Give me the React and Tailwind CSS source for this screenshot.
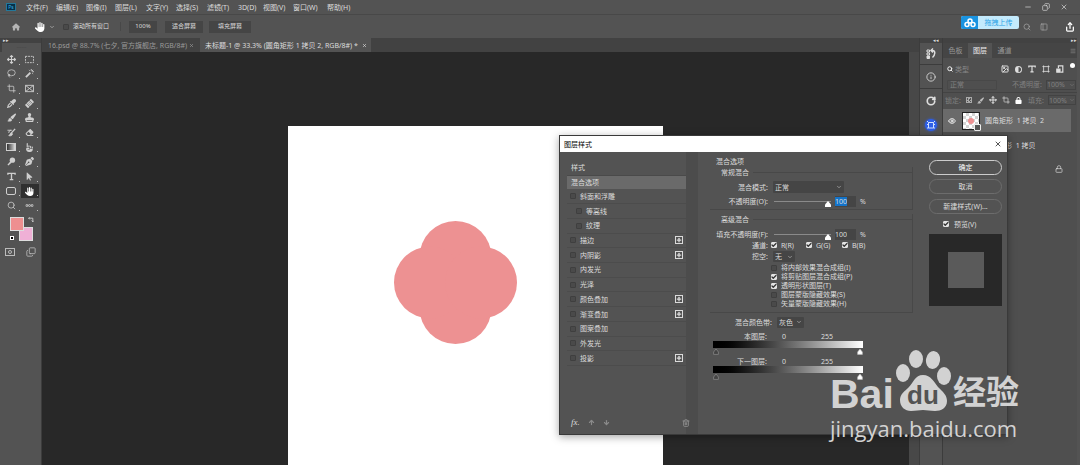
import React from 'react';
import {
    FaArrowPointer,
    FaArrowsUpDownLeftRight,
    FaBandage,
    FaCircleHalfStroke,
    FaEraser,
    FaEyeDropper,
    FaHand,
    FaHandPointUp,
    FaHouse,
    FaLock,
    FaPaintbrush,
    FaPenNib,
    FaStamp,
} from 'react-icons/fa6';
import {
    ArrowDown,
    ArrowUp,
    Check,
    ChevronDown,
    Copy,
    Crop,
    Ellipsis,
    Eye,
    Image,
    Info,
    Lasso,
    Lock,
    Menu,
    Minus,
    Move,
    PanelLeft,
    Plus,
    RotateCw,
    Search,
    Share,
    Trash2,
    X,
} from 'lucide-react';

const menus = [
    ['文件(F)', 'w-[30px]'],
    ['编辑(E)', 'w-[30px]'],
    ['图像(I)', 'w-[29px]'],
    ['图层(L)', 'w-[31px]'],
    ['文字(Y)', 'w-[30px]'],
    ['选择(S)', 'w-[31px]'],
    ['滤镜(T)', 'w-[31px]'],
    ['3D(D)', 'w-[25px]'],
    ['视图(V)', 'w-[30px]'],
    ['窗口(W)', 'w-[34px]'],
    ['帮助(H)', 'w-[30px]'],
];

const MarqueeIcon = () => (
    <svg viewBox="0 0 20 16" className="h-2 w-[10px]" fill="none" stroke="currentColor" strokeWidth="2" strokeDasharray="4 2">
        <path d="M1 1h18v14H1z" />
    </svg>
);

const WandIcon = () => (
    <svg viewBox="0 0 20 20" className="size-[10px]" fill="none" stroke="currentColor" strokeWidth="2">
        <path d="M2 18L12 8" strokeWidth="4" />
        <path d="M14 0v4M20 6h-4M18 2l-3 3M9 2l2 2M18 11l-2-2" />
    </svg>
);

const FrameIcon = () => (
    <svg viewBox="0 0 20 16" className="h-2 w-[10px]" fill="none" stroke="currentColor" strokeWidth="2">
        <path d="M1 1h18v14H1zM1 1l18 14M19 1L1 15" />
    </svg>
);

const HistoryBrushIcon = () => (
    <svg viewBox="0 0 20 20" className="size-[10px]" fill="none" stroke="currentColor" strokeWidth="2">
        <path d="M1 5h9M10 5c-5 0-6 3-6 6" />
        <path d="M18 2L9 12" strokeWidth="3" />
        <path d="M10 11c-3 0-3 4-6 6 4 1 8 0 8-4z" fill="currentColor" />
    </svg>
);

const GradientIcon = () => (
    <span className="h-2 w-[10px] border border-[#cfcfcf] bg-linear-to-r from-[#333] to-[#ddd]" />
);

const DodgeIcon = () => (
    <svg viewBox="0 0 20 20" className="size-[10px]" fill="currentColor">
        <circle cx="12" cy="7" r="6" />
        <path d="M7 10l3 3-7 6-2-2z" />
    </svg>
);

const ShapeIcon = () => <span className="h-2 w-[10px] rounded-[2px] border border-[#cfcfcf]" />;

const TypeIcon = () => (
    <svg viewBox="0 0 20 20" className="size-2" fill="none" stroke="currentColor" strokeWidth="3">
        <path d="M2 6V3h16v3M10 3v14M6 17h8" />
    </svg>
);

const tools = [
    ['移动', FaArrowsUpDownLeftRight, '选框', MarqueeIcon],
    ['套索', Lasso, '魔棒', WandIcon],
    ['裁剪', Crop, '图框', FrameIcon],
    ['吸管', FaEyeDropper, '修复画笔', () => <FaBandage className="-rotate-45" />],
    ['画笔', FaPaintbrush, '图章', FaStamp],
    ['历史画笔', HistoryBrushIcon, '橡皮擦', FaEraser],
    ['渐变', GradientIcon, '涂抹', FaHandPointUp],
    ['减淡', DodgeIcon, '钢笔', FaPenNib],
    ['文字', TypeIcon, '选择', FaArrowPointer],
    ['矩形', ShapeIcon, '抓手', FaHand],
    ['缩放', Search, '更多', () => <Ellipsis strokeWidth={5} />],
];

const effects = [
    { name: '斜面和浮雕' },
    { name: '等高线', sub: true },
    { name: '纹理', sub: true },
    { name: '描边', add: true },
    { name: '内阴影', add: true },
    { name: '内发光' },
    { name: '光泽' },
    { name: '颜色叠加', add: true },
    { name: '渐变叠加', add: true },
    { name: '图案叠加' },
    { name: '外发光' },
    { name: '投影', add: true },
];

const blendFlags = [
    ['将内部效果混合成组(I)', false],
    ['将剪贴图层混合成组(P)', true],
    ['透明形状图层(T)', true],
    ['图层蒙版隐藏效果(S)', false],
    ['矢量蒙版隐藏效果(H)', false],
];

function CheckBox({ label, checked = false, className = '' }) {
    return (
        <label className={`flex items-center ${className}`}>
            <span className="relative flex size-[6px] shrink-0">
                <input
                    type="checkbox"
                    defaultChecked={checked}
                    className="peer size-full appearance-none rounded-[1px] border border-[#3f3f3f] bg-[#4a4a4a] checked:border-[#e4e4e4] checked:bg-[#e4e4e4]"
                />
                <Check className="pointer-events-none absolute inset-0 hidden size-full text-[#333] peer-checked:block" strokeWidth={5} />
            </span>
            <span>{label}</span>
        </label>
    );
}

function DropDown({ label, value, className = '' }) {
    return (
        <span className={`relative flex items-center ${className}`}>
            <select aria-label={label} className="h-full w-full appearance-none rounded-[1px] bg-[#454545] px-[2px] leading-none">
                <option>{value}</option>
            </select>
            <ChevronDown className="pointer-events-none absolute right-[2px] size-[6px]" />
        </span>
    );
}

function OpacityRow({ id, label, active, className = '' }) {
    return (
        <div className={`flex items-center ${className}`}>
            <label htmlFor={id} className="flex w-[54px] shrink-0 justify-end whitespace-nowrap">{label}</label>
            <input
                type="range"
                aria-label={label}
                defaultValue={100}
                className="ml-[6px] h-px w-[57px] appearance-none bg-[#8a8a8a] [&::-webkit-slider-thumb]:mt-[6px] [&::-webkit-slider-thumb]:h-[6px] [&::-webkit-slider-thumb]:w-[6px] [&::-webkit-slider-thumb]:appearance-none [&::-webkit-slider-thumb]:bg-white [&::-webkit-slider-thumb]:[clip-path:polygon(50%_0,100%_60%,100%_100%,0_100%,0_60%)]"
            />
            <span className="ml-1 flex h-[11px] w-[21px] items-center bg-[#454545]">
                <input
                    id={id}
                    defaultValue="100"
                    className={active ? 'h-[9px] w-3 bg-[#1373c9] text-center' : 'h-[9px] w-3 bg-transparent text-center'}
                />
            </span>
            <span className="ml-1">%</span>
        </div>
    );
}

function BlendRamp({ label, className = '' }) {
    return (
        <div className={className}>
            <div className="flex h-[10px] items-center">
                <span className="w-[54px] text-right">{label}</span>
                <span className="w-[34px] text-center">0</span>
                <span className="w-[52px] text-center">255</span>
            </div>
            <div className="h-[7px] w-[150px] bg-linear-to-r from-black to-white" />
            <div className="mt-px flex h-[6px] w-[150px] justify-between">
                <svg viewBox="0 0 10 10" className="size-[6px] fill-[#444] stroke-[#999]">
                    <path d="M5 0l4 5v4H1V5z" />
                </svg>
                <svg viewBox="0 0 10 10" className="size-[6px] fill-white stroke-[#bbb]">
                    <path d="M5 0l4 5v4H1V5z" />
                </svg>
            </div>
        </div>
    );
}

function TopBars() {
    return (
        <header className="relative shrink-0">
            <nav className="flex h-[14px] items-center">
                <span className="ml-[6px] mr-[10px] flex h-2 w-[10px] items-center justify-center border border-[#24789a] bg-[#06304a] text-[5px] leading-none text-[#3bb8e8]">Ps</span>
                {menus.map(([name, width]) => (
                    <button key={name} className={`${width} h-[13px] text-left whitespace-nowrap`}>{name}</button>
                ))}
                <div className="mr-3 ml-auto flex items-center gap-[10px]">
                    <button aria-label="最小化"><Minus className="size-2" /></button>
                    <button aria-label="还原"><Copy className="size-2 -scale-x-100" /></button>
                    <button aria-label="关闭"><X className="size-2" /></button>
                </div>
            </nav>
            <div className="flex h-6 items-center border-t border-[#484848] pl-3 text-[6px]">
                <FaHouse className="size-2 text-[#b5b5b5]" />
                <FaHand className="ml-[15px] size-[10px] text-white" />
                <ChevronDown className="ml-1 size-[6px]" />
                <CheckBox label="滚动所有窗口" className="ml-2 w-[58px] gap-1 border-r border-[#484848] whitespace-nowrap" />
                <button className="ml-2 h-3 w-7 bg-[#454545]">100%</button>
                <button className="ml-2 h-3 w-[38px] bg-[#454545]">适合屏幕</button>
                <button className="ml-[6px] h-3 w-[42px] bg-[#454545]">填充屏幕</button>
                <div className="mr-[5px] ml-auto flex items-center gap-[9px]">
                    <Search className="size-2 text-[#aaa]" />
                    <PanelLeft className="size-2 text-[#aaa]" />
                    <Share className="ml-2 size-[10px] text-white" strokeWidth={3} />
                </div>
            </div>
            <button className="absolute top-4 right-[61px] flex h-[13px] w-[58px] items-stretch overflow-hidden rounded-[2px] bg-[#c3eafc] text-[7px] text-[#2ba2e6]">
                <span className="flex w-[17px] items-center justify-center bg-[#1a93e0]">
                    <svg viewBox="0 0 24 20" className="h-[10px] w-3" fill="none" stroke="white" strokeWidth="3">
                        <circle cx="12" cy="6" r="4" />
                        <circle cx="6" cy="13" r="4" />
                        <circle cx="18" cy="13" r="4" />
                    </svg>
                </span>
                <span className="flex-1 self-center">拖拽上传</span>
            </button>
        </header>
    );
}

function Toolbar() {
    return (
        <aside className="w-[42px] shrink-0 border-r border-[#3c3c3c]">
            <div className="h-[5px] bg-[#424242] pl-[3px] text-[5px] leading-[4px]">▸▸</div>
            <div className="h-[9px] border-l-2 border-[#424242] text-center text-[5px] leading-[9px] text-[#333]">┄┄</div>
            <div className="flex h-[161px] flex-col px-[2px]">
                {tools.map(([leftName, LeftIcon, rightName, RightIcon]) => (
                    <div key={leftName} className="flex flex-1 text-[#cfcfcf]">
                        <button aria-label={leftName} className="relative flex flex-1 items-center justify-center [&>svg]:size-[9px]">
                            <LeftIcon />
                            <i className="absolute right-px bottom-[2px] size-px bg-[#bbb]" />
                        </button>
                        <button
                            aria-label={rightName}
                            className={`relative flex flex-1 items-center justify-center [&>svg]:size-[9px] ${rightName === '抓手' ? 'bg-[#2f2f2f] text-white' : ''}`}
                        >
                            <RightIcon />
                            <i className="absolute right-px bottom-[2px] size-px bg-[#bbb]" />
                        </button>
                    </div>
                ))}
            </div>
            <div className="relative ml-[10px] mt-1 h-6 w-[23px]">
                <button aria-label="背景色" className="absolute right-0 bottom-0 size-[14px] border border-[#ddd] bg-[#efb0d6]" />
                <button aria-label="前景色" className="absolute top-0 left-0 size-[14px] border border-[#ddd] bg-[#ee8f90]" />
                <svg viewBox="0 0 10 10" className="absolute top-0 right-[-1px] size-[6px]" fill="none" stroke="#ccc" strokeWidth="1.5">
                    <path d="M3 0L1 2l2 2M1 2h7v6M6 6l2 2 2-2" />
                </svg>
                <span className="absolute bottom-px left-0 size-1 border border-white bg-black" />
            </div>
            <div className="mt-[6px] flex items-center justify-around text-[#bbb]">
                <span className="flex h-2 w-[10px] items-center justify-center border border-current">
                    <i className="size-1 rounded-full border border-current" />
                </span>
                <Copy className="size-[10px] -scale-y-100" />
            </div>
        </aside>
    );
}

function Workspace() {
    return (
        <main className="flex min-w-0 flex-1 flex-col">
            <div className="flex h-[14px] shrink-0 items-stretch bg-[#424242] text-[7px] whitespace-nowrap">
                <div className="flex w-[158px] items-center justify-between pr-[6px] pl-[6px] text-[#999]">
                    <span>16.psd @ 88.7% (七夕, 官方旗舰店, RGB/8#)</span>
                    <X className="size-[5px]" strokeWidth={3} />
                </div>
                <div className="flex w-[171px] items-center justify-between bg-[#535353] pr-1 pl-[5px]">
                    <span>未标题-1 @ 33.3% (圆角矩形 1 拷贝 2, RGB/8#) *</span>
                    <X className="size-[5px]" strokeWidth={3} />
                </div>
            </div>
            <div className="flex flex-1">
                <div className="flex flex-1 justify-center bg-[#282828] pt-[74px]">
                    <div className="w-[375px] bg-white pt-[95px] pl-[106px]">
                        <svg viewBox="0 0 123 123" className="size-[123px] fill-[#ed9192]">
                            <circle cx="61.5" cy="36" r="36" />
                            <circle cx="61.5" cy="87" r="36" />
                            <circle cx="36" cy="61.5" r="36" />
                            <circle cx="87" cy="61.5" r="36" />
                        </svg>
                    </div>
                </div>
                <div className="w-[10px] bg-[#484848]" />
            </div>
        </main>
    );
}

function IconStrip() {
    return (
        <aside className="flex w-6 shrink-0 flex-col border-x border-[#3c3c3c] text-[#dedede]">
            <div className="h-[5px] bg-[#424242] pr-[3px] text-right text-[5px] leading-[4px]">◂◂</div>
            <button aria-label="历史记录" className="flex h-[22px] items-center justify-center border-b border-[#3c3c3c]">
                <svg viewBox="0 0 20 24" className="h-3 w-[10px]" fill="none" stroke="currentColor" strokeWidth="2">
                    <path d="M2 4h5v4H2zM2 10h5v4H2z" />
                    <path d="M2 16h5v5H2z" fill="currentColor" />
                    <path d="M11 5h2c7 0 5 10 0 14M14 1l-4 4 4 4" strokeWidth="3" />
                </svg>
            </button>
            <button aria-label="信息" className="flex h-6 items-center justify-center border-b border-[#3c3c3c]">
                <Info className="size-[10px]" />
            </button>
            <button aria-label="更新" className="flex h-6 items-center justify-center">
                <RotateCw className="size-[10px]" strokeWidth={4} />
            </button>
            <button aria-label="画板" className="flex h-6 items-center justify-center">
                <span className="flex size-3 items-center justify-center rounded-full bg-[#2e5fe8] shadow-[0_0_3px_#2e5fe8]">
                    <svg viewBox="0 0 20 20" className="size-[10px]" fill="none" stroke="#cfe0ff" strokeWidth="2">
                        <path d="M5 5h10v11H5zM2 2l3 3M18 2l-3 3M2 16h3M15 16h3M2 9h3M15 9h3" />
                    </svg>
                </span>
            </button>
        </aside>
    );
}

function LayersPanel() {
    return (
        <aside className="mr-[3px] flex w-[134px] shrink-0 flex-col bg-[#4f4f4f] whitespace-nowrap">
            <div className="h-[5px] bg-[#424242] text-right text-[5px] leading-[4px]">▸▸</div>
            <div role="tablist" className="flex h-[15px] items-stretch bg-[#454545] text-[#999]">
                <button role="tab" className="w-[25px]">色板</button>
                <button role="tab" className="w-6 bg-[#535353] text-[#eee]">图层</button>
                <button role="tab" className="w-[25px]">通道</button>
                <Menu className="mr-px ml-auto size-[6px] self-center" />
            </div>
            <div className="flex h-[17px] items-center gap-[6px] pt-[5px] pr-[2px] pl-1 text-[#dedede]">
                <label className="mr-auto flex items-center gap-[2px] text-[#888]">
                    <Search className="size-[6px] text-[#eee]" strokeWidth={4} />
                    <select aria-label="筛选类型" className="w-10 appearance-none">
                        <option>类型</option>
                    </select>
                </label>
                <Image className="size-2" strokeWidth={3} />
                <FaCircleHalfStroke className="size-[7px]" />
                <TypeIcon />
                <svg viewBox="0 0 20 20" className="size-2" fill="none" stroke="currentColor" strokeWidth="2">
                    <path d="M4 1v18M16 1v18M1 4h18M1 16h18" />
                </svg>
                <svg viewBox="0 0 20 20" className="size-2" fill="none" stroke="currentColor" strokeWidth="3">
                    <path d="M6 8V2h11v16h-6" />
                    <path d="M2 10h8v8H2z" fill="currentColor" />
                </svg>
                <i className="size-[5px] self-start rounded-full bg-white" />
            </div>
            <div className="mt-[3px] flex h-[13px] items-center gap-1 pr-px pl-1 text-[#808080]">
                <select aria-label="混合模式" className="mr-auto h-[10px] w-[50px] appearance-none rounded-[1px] border border-[#484848] px-[2px] leading-none">
                    <option>正常</option>
                </select>
                <label htmlFor="layer-opacity">不透明度:</label>
                <span className="flex items-center border border-[#434343]">
                    <input id="layer-opacity" defaultValue="100%" className="h-2 w-[22px]" />
                    <ChevronDown className="size-[6px]" />
                </span>
            </div>
            <div className="mt-px flex h-[15px] items-center gap-[5px] border-t border-[#434343] pr-px pl-[2px] text-[#808080]">
                <span>锁定:</span>
                <span className="size-[6px] shrink-0 border border-[#aaa] bg-[repeating-conic-gradient(#aaa_0_25%,#555_0_50%)] bg-size-[3px_3px]" />
                <FaPaintbrush className="size-[7px] shrink-0 text-[#bbb]" />
                <Move className="size-2 shrink-0 text-[#dedede]" strokeWidth={3} />
                <Crop className="size-2 shrink-0 text-[#dedede]" />
                <FaLock className="size-[7px] shrink-0 text-white" />
                <label htmlFor="layer-fill" className="mr-[-1px] ml-auto">填充:</label>
                <span className="flex items-center border border-[#434343]">
                    <input id="layer-fill" defaultValue="100%" className="h-2 w-5" />
                    <ChevronDown className="size-[6px]" />
                </span>
            </div>
            <div className="mt-[2px] mr-[6px] flex h-[23px] items-center bg-[#6a6a6a]">
                <Eye className="ml-[5px] size-2 text-[#eee]" strokeWidth={3} />
                <span className="relative ml-[6px] flex size-[18px] items-center justify-center border border-[#222] bg-white bg-[repeating-conic-gradient(#d4d4d4_0_25%,#fff_0_50%)] bg-size-[6px_6px]">
                    <i className="size-[6px] rounded-full bg-[#ed9192]" />
                    <i className="absolute right-[-2px] bottom-[-2px] size-[7px] rounded-[1px] border border-[#eee] bg-[#555]" />
                </span>
                <span className="ml-[5px]">圆角矩形&nbsp; 1 拷贝&nbsp; 2</span>
            </div>
            <div className="mt-px mr-[6px] flex h-6 items-center pl-[41px]">圆角矩形&nbsp; 1 拷贝</div>
            <div className="mr-[6px] flex h-[23px] items-center justify-end pr-2">
                <Lock className="size-2" />
            </div>
        </aside>
    );
}

function StyleList() {
    return (
        <div className="flex w-[119px] flex-col justify-between">
            <div className="flex h-[205px] flex-col">
                <button className="flex flex-1 items-center border-b border-[#4a4a4a] pl-1">样式</button>
                <button className="flex flex-1 items-center bg-[#6a6a6a] pl-1">混合选项</button>
                {effects.map((effect) => (
                    <div key={effect.name} className="flex flex-1 items-center justify-between border-b border-[#4c4c4c] pr-[3px]">
                        <CheckBox label={effect.name} className={effect.sub ? 'gap-[4px] pl-[9px]' : 'gap-[4px] pl-[3px]'} />
                        {effect.add && (
                            <button aria-label={`添加${effect.name}`} className="flex size-2 items-center justify-center border border-[#dadada]">
                                <Plus className="size-[6px]" strokeWidth={5} />
                            </button>
                        )}
                    </div>
                ))}
            </div>
            <div className="mb-[7px] flex items-center gap-2 pl-1 text-[#8a8a8a]">
                <span className="font-['Liberation_Serif',serif] text-[9px] leading-none text-[#ddd] italic">fx.</span>
                <ArrowUp className="size-[7px]" strokeWidth={4} />
                <ArrowDown className="size-[7px]" strokeWidth={4} />
                <Trash2 className="mr-[-4px] ml-auto size-2" strokeWidth={3} />
            </div>
        </div>
    );
}

function BlendOptions() {
    return (
        <div className="ml-3 w-[207px] pt-1">
            <h2 className="h-[11px] pl-[6px] leading-[11px]">混合选项</h2>
            <section className="mr-1 border-r border-b border-[#484848] pb-px">
                <h3 className="flex h-[10px] items-center gap-1 pl-[11px] after:h-px after:flex-1 after:bg-[#484848]">常规混合</h3>
                <div className="mt-[3px] flex h-[14px] items-center">
                    <span className="w-[58px] text-right">混合模式:</span>
                    <DropDown label="混合模式" value="正常" className="ml-[5px] h-3 w-[71px]" />
                </div>
                <OpacityRow id="opacity" label="不透明度(O):" active className="h-[14px] pl-1" />
            </section>
            <section className="mt-1 mr-1 border-r border-b border-[#484848] pb-1">
                <h3 className="flex h-[10px] items-center gap-1 pl-[11px] after:h-px after:flex-1 after:bg-[#484848]">高级混合</h3>
                <OpacityRow id="fill" label="填充不透明度(F):" className="mt-1 h-3 pl-1" />
                <div className="flex h-[10px] items-center">
                    <span className="mr-[3px] w-[58px] text-right">通道:</span>
                    <CheckBox label="R(R)" checked className="w-[35px] gap-1" />
                    <CheckBox label="G(G)" checked className="w-9 gap-1" />
                    <CheckBox label="B(B)" checked className="gap-1" />
                </div>
                <div className="flex h-[13px] items-center">
                    <span className="w-[58px] text-right">挖空:</span>
                    <DropDown label="挖空" value="无" className="ml-[5px] h-[11px] w-[22px]" />
                </div>
                {blendFlags.map(([name, checked]) => (
                    <CheckBox key={name} label={name} checked={checked} className="ml-[61px] h-[9px] gap-1" />
                ))}
            </section>
            <div className="mt-[3px] flex h-3 items-center">
                <span className="w-[62px] text-right">混合颜色带:</span>
                <DropDown label="混合颜色带" value="灰色" className="ml-[5px] h-[11px] w-[27px]" />
            </div>
            <BlendRamp label="本图层:" className="mt-[3px] pl-[3px]" />
            <BlendRamp label="下一图层:" className="mt-px pl-[3px]" />
        </div>
    );
}

function LayerStyleDialog() {
    return (
        <div role="dialog" aria-label="图层样式" className="absolute top-[135px] left-[559px] flex h-[300px] w-[449px] flex-col border border-[#3a3a3a] bg-[#535353] shadow-[0_2px_8px_rgba(0,0,0,0.35)]">
            <div className="flex h-4 shrink-0 items-center justify-between bg-white pr-[5px] pl-1 text-black">
                <span>图层样式</span>
                <button aria-label="关闭"><X className="size-2" strokeWidth={2} /></button>
            </div>
            <div className="flex flex-1">
                <div className="flex border-r-12 border-[#4c4c4c] pt-[9px] pl-[7px]">
                    <StyleList />
                </div>
                <BlendOptions />
                <div className="mr-[5px] ml-auto flex w-[73px] flex-col pt-2">
                    <button className="h-[15px] rounded-full border border-[#ccc] text-white">确定</button>
                    <button className="mt-1 h-[15px] rounded-full border border-[#6c6c6c]">取消</button>
                    <button className="mt-[5px] h-[15px] rounded-full border border-[#6c6c6c]">新建样式(W)...</button>
                    <CheckBox label="预览(V)" checked className="mt-1 h-3 gap-[5px] pl-[14px]" />
                    <div className="mt-1 flex h-[72px] items-center justify-center bg-[#282828]">
                        <div className="size-9 bg-[#5a5a5a]" />
                    </div>
                </div>
            </div>
        </div>
    );
}

function Watermark() {
    return (
        <div className="pointer-events-none absolute top-[350px] left-[830px] text-[#d2d2d2]">
            <div className="flex h-[62px] items-end">
                <span className="w-[65px] font-['Liberation_Sans',sans-serif] text-[41px] leading-[36px] font-bold">Bai</span>
                <svg viewBox="0 0 58 62" className="h-[62px] w-[58px]" fill="currentColor">
                    <ellipse cx="8" cy="23" rx="7" ry="9" />
                    <ellipse cx="21" cy="9" rx="7" ry="9" />
                    <ellipse cx="38" cy="10" rx="7" ry="9" transform="rotate(10 38 10)" />
                    <ellipse cx="49" cy="26" rx="7" ry="9" />
                    <path d="M28 25c8 0 11 7 15 12 5 5 9 8 9 14 0 7-6 10-12 10-5 0-8-1-12-1s-7 1-12 1C10 61 5 57 5 50c0-6 5-9 9-13s6-12 14-12z" />
                    <text x="28" y="54" textAnchor="middle" fontSize="26" fontWeight="bold" fill="#535353" className="font-['Liberation_Sans',sans-serif]">du</text>
                </svg>
                <span className="text-[33px] leading-[40px] font-bold">经验</span>
            </div>
            <div className="font-['Open_Sans',sans-serif] text-[22px] leading-[32px] font-medium">jingyan.baidu.com</div>
        </div>
    );
}

export default function App() {
    return (
        <div className="relative flex h-screen flex-col overflow-hidden bg-[#535353] font-['Noto_Sans','Noto_Sans_CJK_SC',sans-serif] text-[7px] leading-[9px] text-[#dcdcdc]">
            <TopBars />
            <div className="flex min-h-0 flex-1">
                <Toolbar />
                <Workspace />
                <IconStrip />
                <LayersPanel />
            </div>
            <LayerStyleDialog />
            <Watermark />
        </div>
    );
}
